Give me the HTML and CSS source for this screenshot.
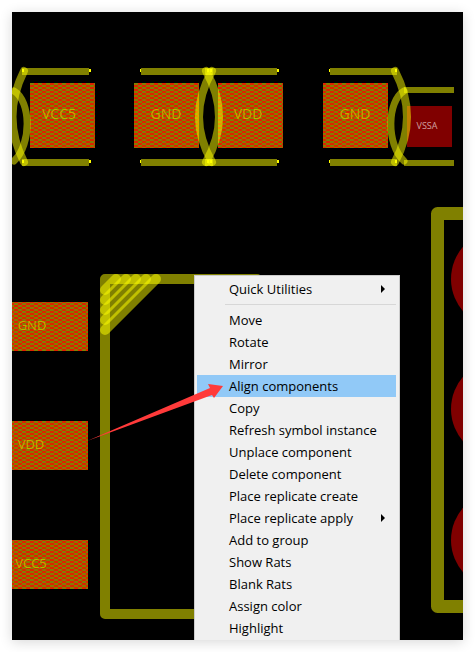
FILE: index.html
```html
<!DOCTYPE html>
<html lang="en">
<head>
<meta charset="utf-8">
<title>Align components</title>
<link rel="stylesheet" href="styles.css">
</head>
<body>
<main class="board">
  <svg class="layout" viewBox="12 12 451 628" preserveAspectRatio="xMinYMin slice" role="img" aria-label="Board layout">
    <defs>
      <pattern id="hatch" x="30" y="83" width="8" height="4" patternUnits="userSpaceOnUse" shape-rendering="crispEdges">
        <rect class="hatch-a" width="8" height="4"/>
        <rect class="hatch-b" y="2" width="4" height="2"/>
        <rect class="hatch-b" x="4" width="4" height="2"/>
      </pattern>
    </defs>

    <g fill="url(#hatch)" shape-rendering="crispEdges">
      <rect x="30" y="83" width="65" height="65"/>
      <rect x="134" y="83" width="65" height="65"/>
      <rect x="218" y="83" width="65" height="65"/>
      <rect x="323" y="83" width="65" height="65"/>
      <rect x="12" y="302" width="76" height="49"/>
      <rect x="12" y="421" width="76" height="49"/>
      <rect x="12" y="540" width="76" height="49"/>
    </g>
    <g class="pad-red">
      <rect x="407" y="106" width="45" height="41"/>
      <circle cx="500" cy="279" r="49"/>
      <circle cx="500" cy="409" r="49"/>
      <circle cx="500" cy="540" r="49"/>
    </g>

    <g class="silk w7 flat">
      <path d="M22 71.5H89"/><path d="M22 162.5H89"/>
      <path d="M141 71.5H213"/><path d="M141 162.5H213"/>
      <path d="M205 71.5H277"/><path d="M205 162.5H277"/>
      <path d="M330 71.5H397"/><path d="M330 162.5H397"/>
    </g>
    <g class="silk w8">
      <path d="M24 71Q1 117 24 162"/>
      <path d="M212 71Q186 117 212 162"/><path d="M206 71Q232 117 206 162"/>
      <path d="M395 71Q419 117 395 162"/>
    </g>
    <g class="silk w7">
      <path d="M14 91C31 101 32 144 14 161"/>
      <path d="M404 91C387 101 386 144 404 161"/>
    </g>
    <g class="silk w6 flat">
      <path d="M404 90H454"/><path d="M404 163H454"/>
    </g>
    <g class="silk w10">
      <path d="M257 279H105V614H257"/>
      <path d="M116 279L105 290"/><path d="M126 279L105 300"/>
      <path d="M136 279L105 310"/><path d="M146 279L105 320"/>
      <path d="M156 279L105 330"/>
    </g>
    <path class="silk w13" d="M480 213.5H437.5V606.5H480"/>

    <g class="tick" shape-rendering="crispEdges">
      <path d="M89 69h2v3h-2zM89 160h2v3h-2zM140 69h1v3h-1zM140 160h1v3h-1zM277 69h2v3h-2zM277 160h2v3h-2zM329 69h1v3h-1zM329 160h1v3h-1zM207 69h2v3h-2zM210 69h2v3h-2zM207 160h2v3h-2zM210 160h2v3h-2zM22 69h2v3h-2zM22 160h2v3h-2zM395 69h2v3h-2zM395 160h2v3h-2z"/>
    </g>

    <g class="net">
      <text x="59" y="119" text-anchor="middle">VCC5</text>
      <text x="166" y="119" text-anchor="middle">GND</text>
      <text x="248" y="119" text-anchor="middle">VDD</text>
      <text x="355" y="119" text-anchor="middle">GND</text>
    </g>
    <g class="net net-side">
      <text x="32" y="330" text-anchor="middle">GND</text>
      <text x="31" y="449" text-anchor="middle">VDD</text>
      <text x="31" y="568" text-anchor="middle">VCC5</text>
    </g>
    <text class="net-small" x="427" y="129" text-anchor="middle">VSSA</text>
  </svg>

  <div class="menu" role="menu">
    <button class="item more" role="menuitem">Quick Utilities</button>
    <hr class="rule">
    <button class="item" role="menuitem">Move</button>
    <button class="item" role="menuitem">Rotate</button>
    <button class="item" role="menuitem">Mirror</button>
    <button class="item active" role="menuitem">Align components</button>
    <button class="item" role="menuitem">Copy</button>
    <button class="item" role="menuitem">Refresh symbol instance</button>
    <button class="item" role="menuitem">Unplace component</button>
    <button class="item" role="menuitem">Delete component</button>
    <button class="item" role="menuitem">Place replicate create</button>
    <button class="item more" role="menuitem">Place replicate apply</button>
    <button class="item" role="menuitem">Add to group</button>
    <button class="item" role="menuitem">Show Rats</button>
    <button class="item" role="menuitem">Blank Rats</button>
    <button class="item" role="menuitem">Assign color</button>
    <button class="item" role="menuitem">Highlight</button>
  </div>

  <svg class="arrow" viewBox="85 380 140 62" width="140" height="62" aria-hidden="true">
    <path d="M87 441L210 388L208 384L223 386L214 398L212 395Z"/>
  </svg>
</main>
</body>
</html>
```
FILE: styles.css
```css
* {
  box-sizing: border-box;
}

body {
  margin: 0;
  padding: 12px;
  background: #fff;
}

.board {
  position: relative;
  height: calc(100vh - 24px);
  overflow: hidden;
  background: #000;
}

body::before {
  content: "";
  position: absolute;
  inset: 12px;
  box-shadow: 0 2px 12px rgba(0, 0, 0, 0.16);
}

.layout {
  display: block;
  width: 100%;
  height: 100%;
}

.hatch-a { fill: #808000; }
.hatch-b { fill: #e02000; }
.pad-red { fill: #800000; }

.silk path,
path.silk {
  fill: none;
  stroke: #ff0;
  stroke-opacity: 0.5;
  stroke-linecap: round;
  stroke-linejoin: round;
}

.flat path { stroke-linecap: butt; }

.w6 path { stroke-width: 6px; }
.w7 path { stroke-width: 7px; }
.w8 path { stroke-width: 8px; }
.w10 path { stroke-width: 10px; }
path.w13 { stroke-width: 13px; }

.tick { fill: #ff0; }

.net {
  font: 14px "Open Sans", "Noto Sans", sans-serif;
  fill: #c8a800;
}

.net-side { font-size: 13px; }

.net-small {
  font: 9px "Open Sans", "Noto Sans", sans-serif;
  fill: #d0a0a0;
}

.menu {
  position: absolute;
  top: 263px;
  left: 182px;
  width: 206px;
  padding: 2px 3px 3px 2px;
  border: 1px solid #ccc;
  background: #f0f0f0;
}

.item {
  display: flex;
  align-items: center;
  justify-content: space-between;
  width: 100%;
  height: 22px;
  padding: 0 11px 0 32px;
  border: 0;
  background: none;
  color: #000;
  font: 13px/22px "Open Sans", "Noto Sans", sans-serif;
  text-align: left;
}

.item.active { background: #91c9f7; }

.more::after {
  content: "";
  border: solid transparent;
  border-width: 4px 0 4px 4px;
  border-left-color: #000;
}

.rule {
  height: 1px;
  margin: 4px 0 4px 28px;
  border: 0;
  background: #d7d7d7;
}

.arrow {
  position: absolute;
  top: 368px;
  left: 73px;
  fill: #ff3a3a;
  pointer-events: none;
}
```
